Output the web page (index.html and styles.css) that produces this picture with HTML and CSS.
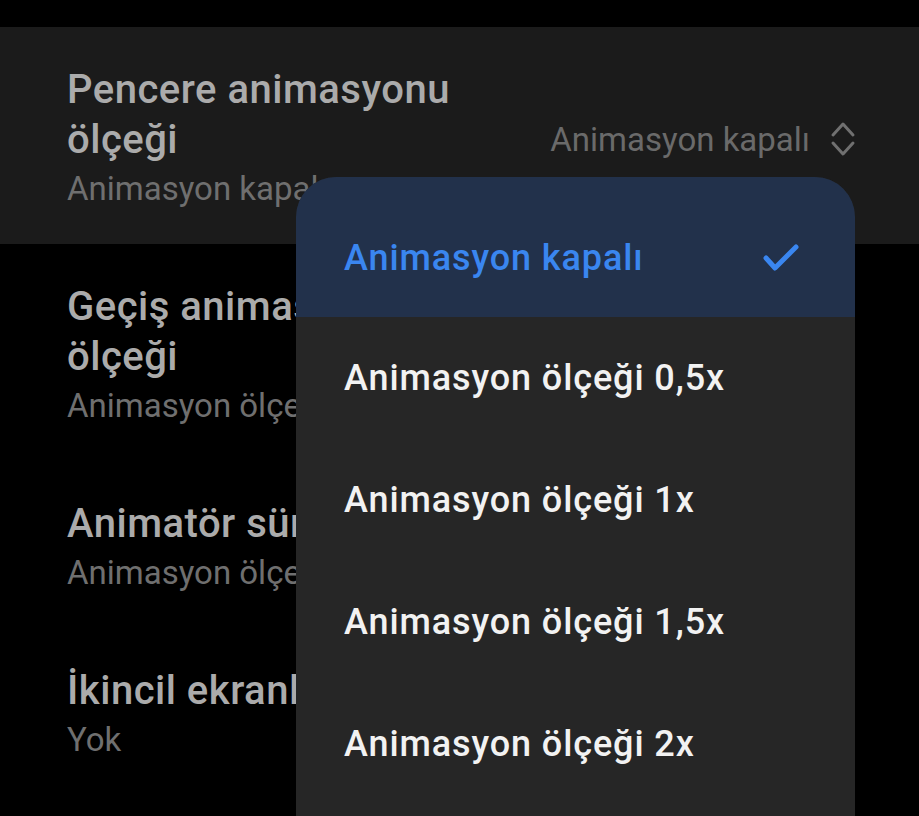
FILE: index.html
```html
<!DOCTYPE html>
<html lang="tr">
<head>
<meta charset="utf-8">
<link rel="stylesheet" href="styles.css">
</head>
<body>
<div class="screen">
  <div class="topbar"></div>
  <div class="row row-active">
    <div class="row-text">
      <div class="title">Pencere animasyonu<br>ölçeği</div>
      <div class="sub">Animasyon kapalı</div>
    </div>
    <div class="value">
      <span>Animasyon kapalı</span>
      <svg class="updown" width="26" height="36" viewBox="0 0 26 36"><polyline points="3,14 13,3 23,14" fill="none" stroke="#707070" stroke-width="3" stroke-linecap="round" stroke-linejoin="round"/><polyline points="3,22 13,33 23,22" fill="none" stroke="#707070" stroke-width="3" stroke-linecap="round" stroke-linejoin="round"/></svg>
    </div>
  </div>
  <div class="row">
    <div class="row-text">
      <div class="title">Geçiş animasyonu<br>ölçeği</div>
      <div class="sub">Animasyon ölçeği 1x</div>
    </div>
  </div>
  <div class="row">
    <div class="row-text">
      <div class="title">Animatör süre ölçeği</div>
      <div class="sub">Animasyon ölçeği 1x</div>
    </div>
  </div>
  <div class="row">
    <div class="row-text">
      <div class="title">İkincil ekranları simüle et</div>
      <div class="sub">Yok</div>
    </div>
  </div>

  <div class="menu">
    <div class="item item-selected">
      <span>Animasyon kapalı</span>
      <svg class="check" width="38" height="30" viewBox="0 0 38 30"><polyline points="4,15 13,25 34,4" fill="none" stroke="#3a86f0" stroke-width="5" stroke-linecap="round" stroke-linejoin="round"/></svg>
    </div>
    <div class="item"><span>Animasyon ölçeği 0,5x</span></div>
    <div class="item"><span>Animasyon ölçeği 1x</span></div>
    <div class="item"><span>Animasyon ölçeği 1,5x</span></div>
    <div class="item"><span>Animasyon ölçeği 2x</span></div>
  </div>
</div>
</body>
</html>
```

FILE: styles.css
```css
html, body {
  margin: 0;
  padding: 0;
  background: #000;
  width: 919px;
  height: 816px;
  overflow: hidden;
}

.screen {
  position: relative;
  width: 919px;
  height: 816px;
  overflow: hidden;
  font-family: Roboto, "Noto Sans", sans-serif;
}

.topbar {
  height: 27px;
  background: #000;
}

.row {
  display: flex;
  align-items: center;
  justify-content: space-between;
  padding: 38px 63px 31px 67px;
  white-space: nowrap;
}

.row-active {
  background: #1b1b1b;
}

.title {
  font-size: 40px;
  line-height: 50px;
  font-weight: 500;
  letter-spacing: 0.5px;
  color: #ababab;
}

.sub {
  font-size: 33px;
  line-height: 48px;
  font-weight: 400;
  color: #6f6f6f;
}

.value {
  display: flex;
  align-items: center;
  gap: 20px;
  font-size: 33px;
  color: #6a6a6a;
}

.updown {
  display: block;
}

.menu {
  position: absolute;
  left: 296px;
  top: 177px;
  width: 559px;
  height: 680px;
  background: #262626;
  border-radius: 40px 40px 0 0;
  overflow: hidden;
}

.item {
  height: 122px;
  display: flex;
  align-items: center;
  justify-content: space-between;
  padding: 0 55px 0 48px;
  font-size: 36px;
  font-weight: 500;
  letter-spacing: 0.9px;
  color: #f2f2f2;
  white-space: nowrap;
}

.item-selected {
  height: 119px;
  padding-top: 21px;
  background: #22314b;
  color: #3a86f0;
}

.check {
  display: block;
}
```
